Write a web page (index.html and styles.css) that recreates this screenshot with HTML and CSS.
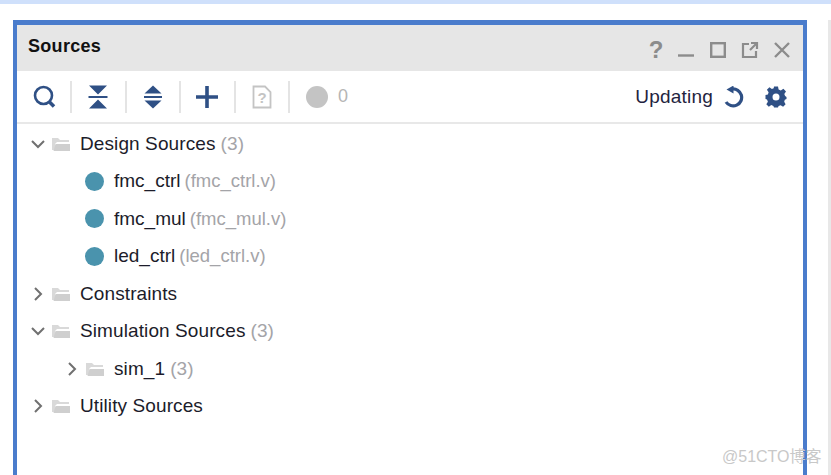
FILE: index.html
```html
<!DOCTYPE html>
<html>
<head>
  <meta charset="UTF-8">
  <title>Sources</title>
  <link rel="stylesheet" href="styles.css">
</head>
<body>
<div class="topbar"></div>
<div class="stage">
  <div class="panel">
    <div class="titlebar">
      <span class="title">Sources</span>
      <div class="winbtns">
        <span class="help">?</span>
        <svg width="18" height="18" viewBox="0 0 18 18"><path d="M1 14.500H17" stroke="#8c8c8c" stroke-width="2.400" fill="none"/></svg>
        <svg width="18" height="18" viewBox="0 0 18 18"><rect x="2.200" y="2.200" width="13.600" height="13.600" stroke="#8c8c8c" stroke-width="2.400" fill="none"/></svg>
        <svg width="18" height="18" viewBox="0 0 18 18"><path d="M8 3H2V16H15V10M10 2H16V8M16 2L9 9" stroke="#8c8c8c" stroke-width="2.200" fill="none"/></svg>
        <svg width="18" height="18" viewBox="0 0 18 18"><path d="M2 2L16 16M16 2L2 16" stroke="#8c8c8c" stroke-width="2.400" fill="none"/></svg>
      </div>
    </div>
    <div class="toolbar">
      <div class="tool tool-first">
        <svg width="26" height="26" viewBox="0 0 26 26"><circle cx="11.500" cy="11.500" r="8.500" stroke="#2f5085" stroke-width="2.600" fill="none"/><path d="M17.500 18L22 22.500" stroke="#2f5085" stroke-width="3.600" fill="none"/></svg>
      </div>
      <div class="tool">
        <svg width="22" height="26" viewBox="0 0 22 26"><path d="M2 1.500H20L11 10.500ZM2 24.500H20L11 15.500Z" fill="#2f5085"/><path d="M1.500 13H20.500" stroke="#2f5085" stroke-width="2"/></svg>
      </div>
      <div class="tool">
        <svg width="20" height="26" viewBox="0 0 20 26"><path d="M10 1.500L18.500 9.500H1.500ZM10 24.500L18.500 16.500H1.500Z" fill="#2f5085"/><path d="M1 13H19" stroke="#2f5085" stroke-width="2"/></svg>
      </div>
      <div class="tool">
        <svg width="24" height="24" viewBox="0 0 24 24"><path d="M12 1V23M1 12H23" stroke="#2f5085" stroke-width="3.600" fill="none"/></svg>
      </div>
      <div class="tool">
        <svg width="20" height="24" viewBox="0 0 20 24"><path d="M1.500 1.500H13L18.500 7V22.500H1.500Z" stroke="#c4c4c4" stroke-width="1.800" fill="none"/><text x="10" y="18" class="qmark">?</text></svg>
      </div>
      <div class="tool tool-last">
        <span class="dot-gray"></span>
        <span class="count">0</span>
      </div>
      <div class="tool-right">
        <span class="updating">Updating</span>
        <svg width="22" height="22" viewBox="0 0 22 22"><path d="M3 16A8.500 8.500 0 1 0 9 3" stroke="#2f5085" stroke-width="3.200" fill="none"/><path d="M10.500 -0.500V7.500L3.500 3.500Z" fill="#2f5085"/></svg>
        <svg class="gear" width="22" height="22" viewBox="0 0 22 22"><path d="M9 0.500H13L13.600 3.600L15.800 4.500L18.400 2.700L21 5.600L19.300 8.100L20.100 10L21.500 11V13L19.800 13.700L19.200 15.700L20.600 18.300L18.100 20.800L15.600 19.200L13.600 20.100L13 21.500H9L8.400 19.900L6.300 19.100L3.800 20.700L1.300 18.200L2.900 15.700L2 13.600L0.500 13V9L2.900 8.400L3.600 6.300L1.900 3.800L4.400 1.300L6.900 3L8.700 2.200ZM11 7.500A3.500 3.500 0 1 0 11 14.500A3.500 3.500 0 1 0 11 7.500Z" fill="#2f5085" fill-rule="evenodd"/></svg>
      </div>
    </div>
    <ul class="tree">
      <li class="row">
        <svg class="chev" width="16" height="16" viewBox="0 0 16 16"><path d="M2 5L8 11L14 5"/></svg>
        <svg class="folder" width="20" height="16" viewBox="0 0 20 16"><path d="M1 2H7L9 4H18V6H6L4 8V14H1Z" fill="#d9d9d9"/><path d="M4.500 8H19V15H2.500Z" fill="#cfcfcf"/></svg>
        <span class="name">Design Sources</span><span class="dim">(3)</span>
      </li>
      <li class="row row-file"><span class="dot"></span><span class="name">fmc_ctrl</span><span class="dim">(fmc_ctrl.v)</span></li>
      <li class="row row-file"><span class="dot"></span><span class="name">fmc_mul</span><span class="dim">(fmc_mul.v)</span></li>
      <li class="row row-file"><span class="dot"></span><span class="name">led_ctrl</span><span class="dim">(led_ctrl.v)</span></li>
      <li class="row">
        <svg class="chev" width="16" height="16" viewBox="0 0 16 16"><path d="M5 2L11 8L5 14"/></svg>
        <svg class="folder" width="20" height="16" viewBox="0 0 20 16"><path d="M1 2H7L9 4H18V6H6L4 8V14H1Z" fill="#d9d9d9"/><path d="M4.500 8H19V15H2.500Z" fill="#cfcfcf"/></svg>
        <span class="name">Constraints</span>
      </li>
      <li class="row">
        <svg class="chev" width="16" height="16" viewBox="0 0 16 16"><path d="M2 5L8 11L14 5"/></svg>
        <svg class="folder" width="20" height="16" viewBox="0 0 20 16"><path d="M1 2H7L9 4H18V6H6L4 8V14H1Z" fill="#d9d9d9"/><path d="M4.500 8H19V15H2.500Z" fill="#cfcfcf"/></svg>
        <span class="name">Simulation Sources</span><span class="dim">(3)</span>
      </li>
      <li class="row row-sub">
        <svg class="chev" width="16" height="16" viewBox="0 0 16 16"><path d="M5 2L11 8L5 14"/></svg>
        <svg class="folder" width="20" height="16" viewBox="0 0 20 16"><path d="M1 2H7L9 4H18V6H6L4 8V14H1Z" fill="#d9d9d9"/><path d="M4.500 8H19V15H2.500Z" fill="#cfcfcf"/></svg>
        <span class="name">sim_1</span><span class="dim">(3)</span>
      </li>
      <li class="row">
        <svg class="chev" width="16" height="16" viewBox="0 0 16 16"><path d="M5 2L11 8L5 14"/></svg>
        <svg class="folder" width="20" height="16" viewBox="0 0 20 16"><path d="M1 2H7L9 4H18V6H6L4 8V14H1Z" fill="#d9d9d9"/><path d="M4.500 8H19V15H2.500Z" fill="#cfcfcf"/></svg>
        <span class="name">Utility Sources</span>
      </li>
    </ul>
  </div>
  <div class="sidestrip"></div>
</div>
<div class="watermark">@51CTO博客</div>
</body>
</html>
```

FILE: styles.css
```css
html, body { margin: 0; padding: 0; height: 475px; overflow: hidden; }
body { background: white; font-family: "Liberation Sans", Arial, sans-serif; color: #1c1c2a; position: relative; }

.topbar { height: 4px; background: #cfe0fb; }
.stage { display: flex; height: 471px; padding: 16px 0 0 13px; box-sizing: border-box; }

.panel { width: 794px; height: 470px; box-sizing: border-box; border: 4px solid #4a7ccc; border-top-width: 5px; border-bottom: none; flex: none; }
.sidestrip { width: 3px; height: 455px; margin-left: 21px; background: #e8e8e8; flex: none; }

.titlebar { height: 46px; background: #e6e6e6; display: flex; align-items: center; justify-content: space-between; padding: 0 12px 4px 11px; box-sizing: border-box; }
.title { font-size: 18px; font-weight: bold; color: #111; letter-spacing: 0.3px; }
.winbtns { display: flex; align-items: center; gap: 14px; padding-top: 8px; }
.help { font-size: 24px; font-weight: bold; color: #8c8c8c; width: 18px; margin-left: 2px; margin-right: -2px; text-align: center; line-height: 24px; }

.toolbar { height: 53px; display: flex; align-items: center; border-bottom: 2px solid #e8e8e8; box-sizing: border-box; padding-left: 13px; }
.tool { height: 32px; display: flex; align-items: center; justify-content: center; width: 54.500px; border-right: 2px solid #e4e4e4; box-sizing: border-box; }
.tool-first { width: 42px; padding-right: 10px; }
.tool-last { border-right: none; justify-content: flex-start; padding-left: 16px; width: auto; gap: 10px; }
.dot-gray { width: 22px; height: 22px; border-radius: 50%; background: #c4c4c4; display: block; }
.count { font-size: 18px; color: #b5b5b5; }
.qmark { font-family: "Liberation Sans", Arial, sans-serif; font-size: 15px; font-weight: bold; fill: #c4c4c4; text-anchor: middle; }
.tool-right { margin-left: auto; display: flex; align-items: center; padding-right: 16px; }
.updating { font-size: 19px; letter-spacing: 0.2px; color: #1f2440; margin-right: 10px; }
.gear { margin-left: 20px; }

.tree { list-style: none; margin: 0; padding: 1px 0 0; }
.row { height: 37.500px; display: flex; align-items: center; padding-left: 13px; font-size: 19px; letter-spacing: 0.1px; white-space: pre; }
.row-file { padding-left: 68px; letter-spacing: 0; }
.row-file .dim { font-size: 18.500px; margin-left: 4px; }
.row-sub { padding-left: 47px; }
.chev { margin-right: 5px; flex: none; }
.chev path { fill: none; stroke: #707070; stroke-width: 2; }
.folder { margin-right: 9px; flex: none; }
.dot { width: 19px; height: 19px; border-radius: 50%; background: #4a93ad; margin-right: 10px; flex: none; }
.name { color: #1c1c2a; }
.dim { color: #a4a4a8; margin-left: 5px; }

.watermark { position: absolute; left: 722px; top: 443px; font-size: 16px; color: #c8c8c8; font-family: "Liberation Sans", "Noto Sans CJK SC", sans-serif; white-space: nowrap; }
```
